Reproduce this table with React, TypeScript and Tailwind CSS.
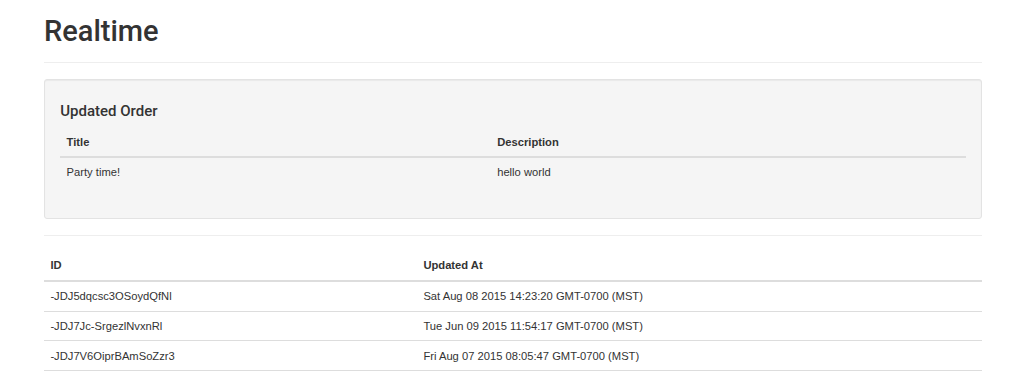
const orders = [{ title: "Party time!", description: "hello world" }];

const updates = [
  { id: "-JDJ5dqcsc3OSoydQfNl", at: "Sat Aug 08 2015 14:23:20 GMT-0700 (MST)" },
  { id: "-JDJ7Jc-SrgezlNvxnRl", at: "Tue Jun 09 2015 11:54:17 GMT-0700 (MST)" },
  { id: "-JDJ7V6OiprBAmSoZzr3", at: "Fri Aug 07 2015 08:05:47 GMT-0700 (MST)" },
];

const th =
  "border-b-[2px] border-[#ddd] px-[6.4px] py-[6.4px] text-left align-bottom font-bold leading-[16px]";
const td = "border-t border-[#ddd] px-[6.4px] py-[6.4px] align-top leading-[16px]";
const cell = "px-[6.4px] py-[6.4px] align-top leading-[16px]";

export default function App() {
  return (
    <div className="min-h-screen bg-white font-['Liberation_Sans',Arial,sans-serif] text-[11.2px] text-[#333]">
      <div className="ml-[44px] w-[938px]">
        <div className="border-b border-[#eee] pt-[16px] pb-[14.3px]">
          <h1 className="font-['Roboto',Arial,sans-serif] text-[29px] font-medium leading-[1.1]">
            Realtime
          </h1>
        </div>

        <div className="mt-[16px] rounded-[3px] border border-[#e3e3e3] bg-[#f5f5f5] p-[15.2px] shadow-[inset_0_1px_1px_rgba(0,0,0,0.05)]">
          <h4 className="mt-[7.8px] mb-[7.6px] font-['Roboto',Arial,sans-serif] text-[15px] font-medium leading-[1.1]">
            Updated Order
          </h4>
          <table className="mb-[16px] w-full border-collapse">
            <thead>
              <tr>
                <th className={`${th} w-[430.6px]`}>Title</th>
                <th className={th}>Description</th>
              </tr>
            </thead>
            <tbody>
              {orders.map((o) => (
                <tr key={o.title}>
                  <td className={cell}>{o.title}</td>
                  <td className={cell}>{o.description}</td>
                </tr>
              ))}
            </tbody>
          </table>
        </div>

        <hr className="mt-[16px] border-0 border-t border-[#eee]" />

        <table className="mt-[15px] mb-[16px] w-full border-collapse">
          <thead>
            <tr>
              <th className={`${th} w-[373px]`}>ID</th>
              <th className={th}>Updated At</th>
            </tr>
          </thead>
          <tbody>
            {updates.map((u) => (
              <tr key={u.id} className="border-b border-[#ddd]">
                <td className={td}>{u.id}</td>
                <td className={td}>{u.at}</td>
              </tr>
            ))}
          </tbody>
        </table>
      </div>
    </div>
  );
}
